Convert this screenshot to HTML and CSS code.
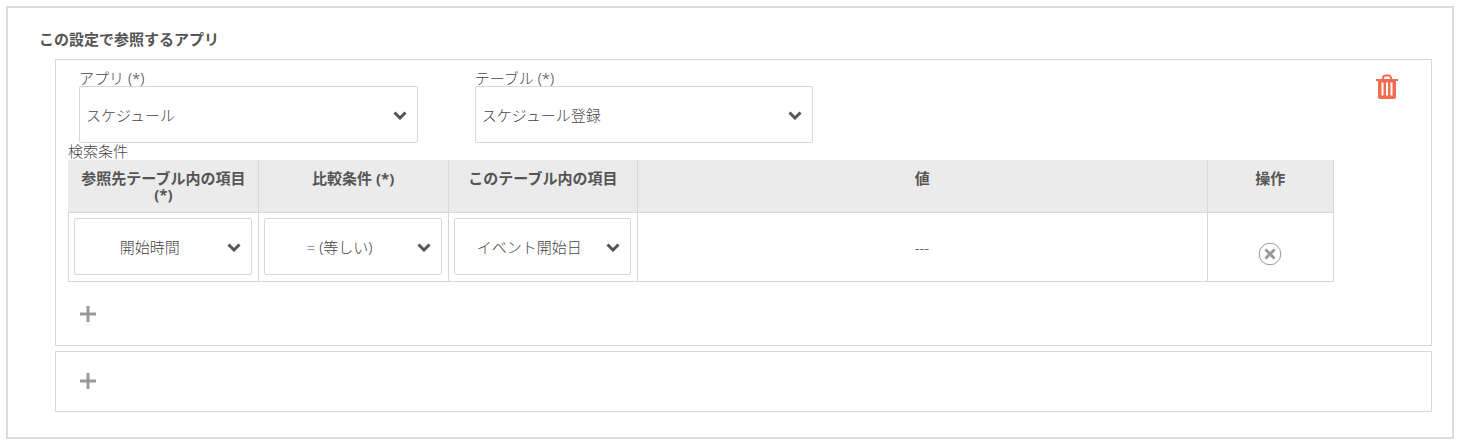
FILE: index.html
```html
<!DOCTYPE html>
<html lang="ja">
<head>
  <meta charset="UTF-8">
  <title>参照アプリ設定</title>
  <link rel="stylesheet" href="styles.css">
</head>
<body>
<div class="panel">
  <h2>この設定で参照するアプリ</h2>

  <div class="box group">
    <div class="fields">
      <div class="field">
        <label for="app">アプリ (*)</label>
        <div class="select">
          <select id="app"><option>スケジュール</option></select>
          <svg class="arrow" viewBox="0 0 14 9"><path d="M1.5 1.5 L7 7 L12.5 1.5"/></svg>
        </div>
      </div>
      <div class="field">
        <label for="table">テーブル (*)</label>
        <div class="select">
          <select id="table"><option>スケジュール登録</option></select>
          <svg class="arrow" viewBox="0 0 14 9"><path d="M1.5 1.5 L7 7 L12.5 1.5"/></svg>
        </div>
      </div>
      <button class="trash" type="button" aria-label="削除">
        <svg width="22" height="26" viewBox="0 0 22 26">
          <path class="handle" d="M6.5 5.5 L7.5 2.5 Q8 1.5 9 1.5 H13 Q14 1.5 14.5 2.5 L15.5 5.5"/>
          <path fill-rule="evenodd" d="M0 5 H22 V7 H20 V23 Q20 25 18 25 H4 Q2 25 2 23 V7 H0 Z M5.5 8.5 V21.5 H7.5 V8.5 Z M10 8.5 V21.5 H12 V8.5 Z M14.5 8.5 V21.5 H16.5 V8.5 Z"/>
        </svg>
      </button>
    </div>

    <div class="caption" id="caption">検索条件</div>
    <table aria-labelledby="caption">
      <thead>
        <tr>
          <th class="item">参照先テーブル内の項目 (*)</th>
          <th class="item">比較条件 (*)</th>
          <th class="item">このテーブル内の項目</th>
          <th>値</th>
          <th class="action">操作</th>
        </tr>
      </thead>
      <tbody>
        <tr>
          <td>
            <div class="select">
              <select aria-label="参照先テーブル内の項目"><option>開始時間</option></select>
              <svg class="arrow" viewBox="0 0 14 9"><path d="M1.5 1.5 L7 7 L12.5 1.5"/></svg>
            </div>
          </td>
          <td>
            <div class="select">
              <select aria-label="比較条件"><option>= (等しい)</option></select>
              <svg class="arrow" viewBox="0 0 14 9"><path d="M1.5 1.5 L7 7 L12.5 1.5"/></svg>
            </div>
          </td>
          <td>
            <div class="select">
              <select aria-label="このテーブル内の項目"><option>イベント開始日</option></select>
              <svg class="arrow" viewBox="0 0 14 9"><path d="M1.5 1.5 L7 7 L12.5 1.5"/></svg>
            </div>
          </td>
          <td>---</td>
          <td>
            <button class="remove" type="button" aria-label="行を削除">
              <svg width="24" height="24" viewBox="0 0 24 24">
                <circle cx="12" cy="12" r="10.8"/>
                <path d="M7.5 7.5 L16.5 16.5 M16.5 7.5 L7.5 16.5"/>
              </svg>
            </button>
          </td>
        </tr>
      </tbody>
    </table>
    <button class="add" type="button" aria-label="条件を追加">
      <svg width="16" height="16" viewBox="0 0 16 16"><path d="M8 0 V16 M0 8 H16"/></svg>
    </button>
  </div>

  <div class="box">
    <button class="add" type="button" aria-label="アプリを追加">
      <svg width="16" height="16" viewBox="0 0 16 16"><path d="M8 0 V16 M0 8 H16"/></svg>
    </button>
  </div>
</div>
</body>
</html>
```
FILE: styles.css
```css
* {
  box-sizing: border-box;
}
body {
  margin: 6px;
  background: #fff;
  color: #444;
  font-family: "Noto Sans", "Noto Sans CJK JP", sans-serif;
  font-size: 15px;
  font-weight: 300;
  line-height: 16px;
}
.panel {
  padding: 23px 20px 25px 31px;
  border: 2px solid #dcdcdc;
  outline: 1px solid #eee;
  background: #fff;
}
h2 {
  margin: 0 0 12px;
  color: #555;
  font-size: 15px;
  line-height: 16px;
}
button {
  padding: 0;
  border: none;
  background: none;
  cursor: pointer;
}
svg {
  display: block;
}
.box {
  margin-left: 16px;
  padding: 21px 12px 22px;
  border: 1px solid #d8d8d8;
}
.group {
  margin-bottom: 5px;
  padding: 10px 12px 20px;
}

/* app and table drop-downs */
.fields {
  display: flex;
  padding: 0 21px 0 11px;
}
.field {
  width: 30%;
  padding-right: 57px;
}
.field label {
  display: block;
}
.select {
  position: relative;
}
.select select {
  display: block;
  width: 100%;
  height: 57px;
  padding: 0 34px 0 6px;
  border: 1px solid #d8d8d8;
  border-radius: 2px;
  background: #fff;
  color: #444;
  font: inherit;
  appearance: none;
}
.arrow {
  position: absolute;
  top: 25px;
  right: 11px;
  width: 14px;
  height: 9px;
  fill: none;
  stroke: #555;
  stroke-width: 3;
  pointer-events: none;
}
.trash {
  align-self: flex-start;
  margin: 4px 0 0 auto;
  fill: #f26c4f;
}
.trash .handle {
  fill: none;
  stroke: #f26c4f;
  stroke-width: 2;
}

/* search conditions */
.caption {
  line-height: 17px;
}
table {
  width: calc(100% - 85px);
  table-layout: fixed;
  border-collapse: collapse;
  text-align: center;
}
th {
  padding: 10px 8px;
  border: solid #d8d8d8;
  border-width: 0 1px 1px;
  background: #ebebeb;
  color: #555;
  vertical-align: top;
}
th:first-child {
  border-left-color: #ebebeb;
}
.item {
  width: 15%;
}
.action {
  width: 10%;
}
td {
  padding: 5px 6px 6px 5px;
  border: 1px solid #d8d8d8;
}
td .select select {
  padding-right: 32px;
  text-align: center;
}
.remove {
  margin-top: 14px;
  vertical-align: middle;
}
.remove svg {
  fill: none;
  stroke: #999;
}
.remove path {
  stroke-width: 3;
}
.add {
  display: block;
  margin-left: 12px;
}
.group .add {
  margin: 24px 0 3px 12px;
}
.add svg {
  stroke: #999;
  stroke-width: 3;
}
```
